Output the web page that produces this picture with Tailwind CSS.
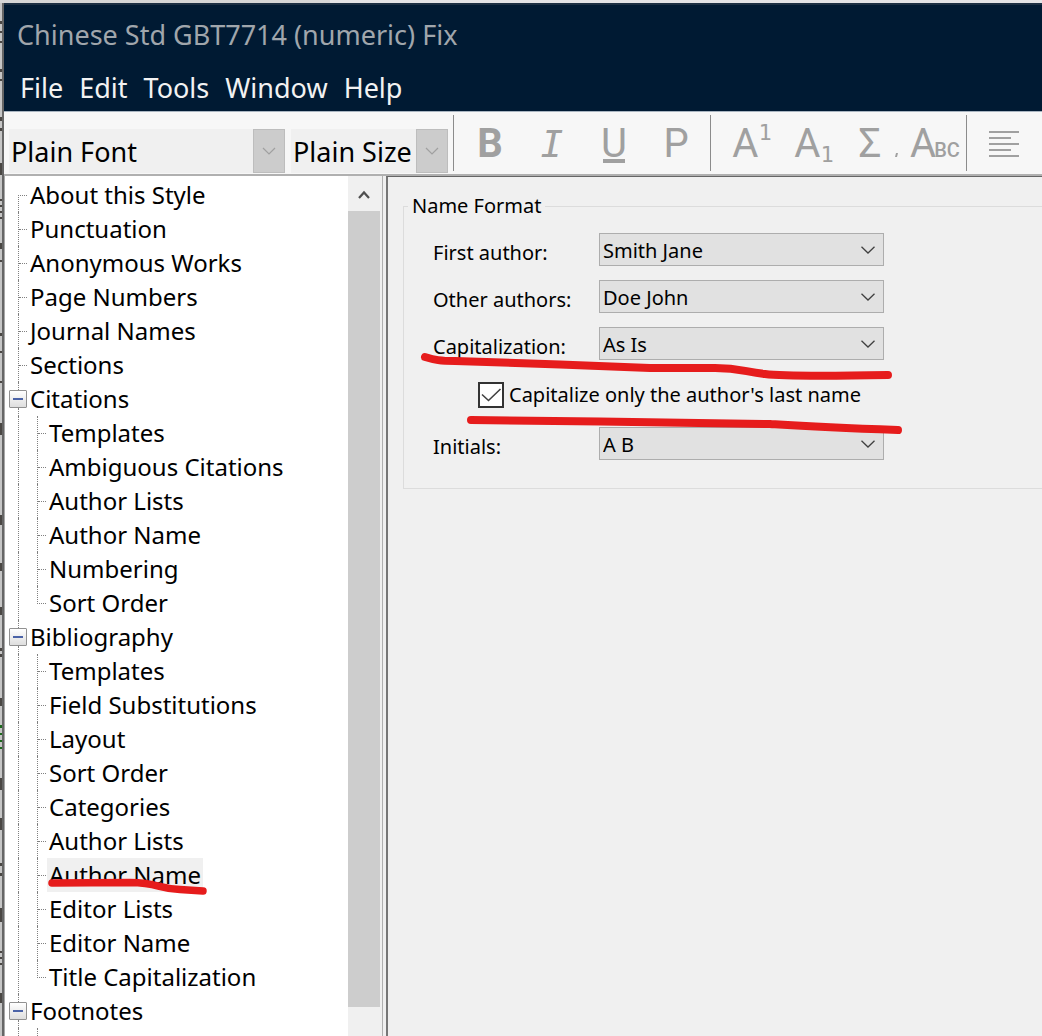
<!DOCTYPE html>
<html lang="en">
<head>
<meta charset="utf-8">
<title>Chinese Std GBT7714 (numeric) Fix</title>
<script src="https://cdn.jsdelivr.net/npm/@tailwindcss/browser@4"></script>
</head>
<body class="h-screen overflow-hidden flex flex-col bg-[#d4d4d4] font-['Noto_Sans','Open_Sans',sans-serif] text-black">
<div class="h-[3px] shrink-0 flex"><div class="w-[330px] bg-[#d6d6d6]"></div><div class="grow bg-[#e4e4e6]"></div></div>
<div class="grow min-h-0 flex">
  <svg class="w-[2px] h-[1033px] shrink-0 bg-[#c6c6c6]" viewBox="0 0 2 1033" fill="#4a4744" aria-hidden="true">
    <path d="M0 18h2v3h-2zM0 28h2v2h-2zM0 38h2v2h-2zM0 66h2v3h-2zM0 76h2v2h-2zM0 114h2v4h-2zM0 125h2v3h-2zM0 160h2v12h-2zM0 196h2v2h-2zM0 202h2v2h-2zM0 208h2v2h-2zM0 214h2v2h-2zM0 240h2v6h-2zM0 257h2v2h-2zM0 330h2v3h-2zM0 348h2v2h-2zM0 378h2v2h-2zM0 420h2v12h-2zM0 512h2v10h-2zM0 560h2v8h-2zM0 604h2v8h-2zM0 645h2v3h-2zM0 651h2v3h-2zM0 695h2v8h-2zM0 775h2v12h-2zM0 815h2v12h-2zM0 860h2v3h-2zM0 870h2v3h-2zM0 905h2v14h-2zM0 948h2v2h-2zM0 954h2v2h-2zM0 960h2v2h-2zM0 990h2v10h-2z"/>
    <path fill="#1c6a1c" d="M0 722h2v3h-2zM0 730h2v2h-2zM0 737h2v2h-2zM0 744h2v2h-2z"/>
  </svg>
  <div class="grow min-w-0 flex flex-col border-l-2 border-[#666]">
    <header class="h-[108px] shrink-0 bg-[#001a33] border-t-2 border-[#1c2f43]">
      <h1 class="h-[60px] pl-[13px] flex items-center text-[27px] text-[#a0a6ac]">Chinese Std GBT7714 (numeric) Fix</h1>
      <nav class="h-[46px] pl-4 flex items-center gap-4 text-[27px] text-[#f2f2f2]">
        <a href="#">File</a><a href="#">Edit</a><a href="#">Tools</a><a href="#">Window</a><a href="#">Help</a>
      </nav>
    </header>
    <div class="h-[65px] shrink-0 flex bg-[#f7f7f7] border-t border-t-[#a9b5c1] border-b-2 border-b-[#b0b0b0] pl-[5px]" role="toolbar" aria-label="Formatting">
      <div class="mt-[17px] h-[44px] w-[276px] shrink-0 flex relative">
        <select aria-label="Font" class="appearance-none w-full bg-[#f0f0f0] pt-[2px] pl-[2px] text-[27px] leading-[42px]"><option>Plain Font</option></select>
        <div class="absolute right-0 inset-y-0 w-8 flex items-center justify-center bg-[#ccc] border border-[#bdbdbd] pointer-events-none"><svg class="w-[14px] h-2" viewBox="0 0 14 8" fill="none" stroke="#a0a0a0" stroke-width="1.2"><path d="M1 1l6 6 6-6"/></svg></div>
      </div>
      <div class="ml-[6px] mt-[17px] h-[44px] w-[157px] shrink-0 flex relative">
        <select aria-label="Size" class="appearance-none w-full bg-[#f0f0f0] pt-[2px] pl-[2px] text-[27px] leading-[42px]"><option>Plain Size</option></select>
        <div class="absolute right-0 inset-y-0 w-8 flex items-center justify-center bg-[#ccc] border border-[#bdbdbd] pointer-events-none"><svg class="w-[14px] h-2" viewBox="0 0 14 8" fill="none" stroke="#a0a0a0" stroke-width="1.2"><path d="M1 1l6 6 6-6"/></svg></div>
      </div>
      <div class="ml-[5px] my-[3px] w-px h-[56px] shrink-0 bg-[#8c8c8c]"></div>
      <div class="ml-[5px] flex h-[62px] text-[#a0a0a0] font-['Roboto',sans-serif] text-[40px] leading-[64px]">
        <button class="w-[62px] font-bold" aria-label="Bold">B</button>
        <button class="w-[62px] italic font-['DejaVu_Sans_Mono',monospace] text-[38px]" aria-label="Italic">I</button>
        <button class="w-[62px] flex flex-col items-center" aria-label="Underline"><span class="h-[47px]">U</span><span class="w-[22px] h-1 bg-[#a0a0a0]"></span></button>
        <button class="w-[62px]" aria-label="Plain">P</button>
      </div>
      <div class="ml-[3px] my-[3px] w-px h-[56px] shrink-0 bg-[#8c8c8c]"></div>
      <div class="ml-[10px] flex h-[62px] text-[#a0a0a0] font-['Roboto',sans-serif] text-[40px] leading-[64px]">
        <button class="w-[62px] flex justify-center" aria-label="Superscript">A<span class="font-['DejaVu_Sans_Mono',monospace] text-[22px] leading-[42px]">1</span></button>
        <button class="w-[62px] flex justify-center" aria-label="Subscript">A<span class="font-['DejaVu_Sans_Mono',monospace] text-[22px] leading-[86px]">1</span></button>
        <button class="w-[50px]" aria-label="Symbol">Σ</button>
        <button class="w-[68px] flex justify-center items-baseline" aria-label="Small caps"><svg class="w-[3px] h-1 mr-3" viewBox="0 0 3 4" fill="#a0a0a0"><path d="M1 0h2l-1 4h-2z"/></svg>A<span class="-ml-[2px] mr-[3px] text-[20px] font-medium">BC</span></button>
      </div>
      <div class="ml-[3px] my-[3px] w-px h-[56px] shrink-0 bg-[#8c8c8c]"></div>
      <button class="ml-[6px] w-[62px] h-[64px] shrink-0 flex items-center justify-center" aria-label="Align left"><svg class="w-[30px] h-[26px]" viewBox="0 0 30 26" fill="#a0a0a0"><path d="M0 0h30v2H0zM0 6h22v2H0zM0 12h30v2H0zM0 18h22v2H0zM0 24h30v2H0z"/></svg></button>
    </div>
    <div class="grow min-h-0 flex bg-[#f0f0f0]">
      <aside class="w-[379px] shrink-0 flex border-l border-l-[#a8a8a8] border-r border-r-[#b0b0b0]">
        <nav class="grow bg-white pt-[2px] overflow-hidden text-[24px] leading-[34px] whitespace-nowrap" aria-label="Style sections">
          <ul id="tree"></ul>
        </nav>
        <div class="w-8 mr-[2px] shrink-0 flex flex-col pt-[2px]">
          <button class="h-[33px] shrink-0 flex items-center justify-center" aria-label="Scroll up"><svg class="w-3 h-[10px]" viewBox="0 0 12 10" fill="none" stroke="#505050" stroke-width="2.2"><path d="M1 8l5-5.500 5 5.500"/></svg></button>
          <div class="grow mb-[29px] bg-[#cdcdcd]"></div>
        </div>
      </aside>
      <main class="grow min-w-0 ml-[3px] border-l-2 border-t border-l-[#777] border-t-[#666] pt-[15px] pl-[15px] text-[20px] leading-7">
        <fieldset class="relative border border-r-0 border-[#dcdcdc] pb-7">
          <legend class="ml-1 px-1">Name Format</legend>
          <div class="pt-[13px] pl-[29px] flex flex-col gap-[14px]" id="fields">
            <div class="flex h-[33px]"><label for="first" class="w-[166px] pt-[6px] shrink-0">First author:</label><div class="relative w-[285px] h-[33px]"><select id="first" class="appearance-none w-full h-full bg-[#e1e1e1] border border-[#adadad] pt-[2px] pl-[3px]"><option>Smith Jane</option></select><svg class="absolute right-[9px] top-[13px] w-[14px] h-2 pointer-events-none" viewBox="0 0 14 8" fill="none" stroke="#404040" stroke-width="1.3"><path d="M.5 .8l6.500 6.200L13.500 .8"/></svg></div></div>
            <div class="flex h-[33px]"><label for="other" class="w-[166px] pt-[6px] shrink-0">Other authors:</label><div class="relative w-[285px] h-[33px]"><select id="other" class="appearance-none w-full h-full bg-[#e1e1e1] border border-[#adadad] pt-[2px] pl-[3px]"><option>Doe John</option></select><svg class="absolute right-[9px] top-[13px] w-[14px] h-2 pointer-events-none" viewBox="0 0 14 8" fill="none" stroke="#404040" stroke-width="1.3"><path d="M.5 .8l6.500 6.200L13.500 .8"/></svg></div></div>
            <div class="flex h-[33px]"><label for="cap" class="w-[166px] pt-[6px] shrink-0">Capitalization:</label><div class="relative w-[285px] h-[33px]"><select id="cap" class="appearance-none w-full h-full bg-[#e1e1e1] border border-[#adadad] pt-[2px] pl-[3px]"><option>As Is</option></select><svg class="absolute right-[9px] top-[13px] w-[14px] h-2 pointer-events-none" viewBox="0 0 14 8" fill="none" stroke="#404040" stroke-width="1.3"><path d="M.5 .8l6.500 6.200L13.500 .8"/></svg></div></div>
            <div class="h-[39px] pt-[3px] pl-[45px] flex items-center gap-[5px]"><span class="relative w-[26px] h-[26px]"><input type="checkbox" id="last" checked class="block appearance-none w-full h-full bg-white border-2 border-[#333]"><svg class="absolute inset-0 w-full h-full pointer-events-none" viewBox="0 0 26 26" fill="none" stroke="#404040" stroke-width="1.6"><path d="M4 12.500l6.500 6L22.500 7"/></svg></span><label for="last">Capitalize only the author's last name</label></div>
            <div class="flex h-[33px]"><label for="initials" class="w-[166px] pt-[6px] shrink-0">Initials:</label><div class="relative w-[285px] h-[33px]"><select id="initials" class="appearance-none w-full h-full bg-[#e1e1e1] border border-[#adadad] pt-[2px] pl-[3px]"><option>A B</option></select><svg class="absolute right-[9px] top-[13px] w-[14px] h-2 pointer-events-none" viewBox="0 0 14 8" fill="none" stroke="#404040" stroke-width="1.3"><path d="M.5 .8l6.500 6.200L13.500 .8"/></svg></div></div>
          </div>
          <svg class="absolute left-4 top-[128px] w-[484px] h-[88px] pointer-events-none" viewBox="420 348 484 88" fill="none" stroke="#e61c1c" stroke-width="8" stroke-linecap="round" stroke-linejoin="round" aria-hidden="true"><path d="M425 357C435 360 440 361 455 361L560 364.500L650 368L715 368C740 368 745 372 765 374C785 376.500 830 376 888 375"/><path d="M471 420L600 421.500L770 424C800 426 820 427.500 898 430"/></svg>
        </fieldset>
      </main>
    </div>
  </div>
</div>
<script>
const sections = [
  ['About this Style'], ['Punctuation'], ['Anonymous Works'], ['Page Numbers'], ['Journal Names'], ['Sections'],
  ['Citations', 'Templates', 'Ambiguous Citations', 'Author Lists', 'Author Name', 'Numbering', 'Sort Order'],
  ['Bibliography', 'Templates', 'Field Substitutions', 'Layout', 'Sort Order', 'Categories', 'Author Lists', '*Author Name', 'Editor Lists', 'Editor Name', 'Title Capitalization'],
  ['Footnotes', 'Templates'],
];
const mark = `<svg class="absolute left-0 top-[18px] w-[162px] h-[20px] pointer-events-none" viewBox="47 876 162 20" fill="none" stroke="#e61c1c" stroke-width="7.500" stroke-linecap="round" aria-hidden="true"><path d="M52 883L130 882.500C160 883 155 888 180 889.500L203 891"/></svg>`;
document.getElementById('tree').innerHTML = sections.map(([name, ...kids], i) => {
  const guide = kids.length
    ? `<button class="ml-1 w-[18px] mr-[3px] flex flex-col" aria-label="Collapse ${name}"><span class="ml-[9px] h-2 border-l border-dotted border-[#808080]"></span><span class="h-[18px] w-[18px] border border-[#919191] rounded-[1px] bg-linear-to-b from-white to-[#dedede] flex items-center justify-center"><span class="w-[10px] h-[2px] bg-[#4b63a7]"></span></span><span class="ml-[9px] h-2 border-l border-dotted border-[#808080]"></span></button>`
    : i === 0
    ? `<span class="ml-[13px] mr-[3px] w-[9px] h-[17px] self-end border-l border-t border-dotted border-[#808080]"></span>`
    : `<span class="ml-[13px] mr-[3px] w-[9px] border-l border-dotted border-[#808080]"><span class="block h-[18px] border-b border-dotted border-[#808080]"></span></span>`;
  const rows = kids.map((k, j) => {
    const sel = k[0] === '*', last = j === kids.length - 1;
    return `<li class="flex h-[34px]"><span class="ml-[13px] w-[19px] shrink-0 border-l border-dotted border-[#808080]"></span>` +
      (last ? `<span class="w-[9px] h-[18px] shrink-0 border-l border-b border-dotted border-[#808080]"></span>`
            : `<span class="w-[9px] shrink-0 border-l border-dotted border-[#808080]"><span class="block h-[18px] border-b border-dotted border-[#808080]"></span></span>`) +
      `<a href="#" class="ml-px px-[2px] ${sel ? 'relative bg-[#f0f0f0]' : ''}">${sel ? k.slice(1) + mark : k}</a></li>`;
  }).join('');
  return `<li><div class="flex h-[34px]">${guide}<a href="#">${name}</a></div>${kids.length ? `<ul>${rows}</ul>` : ''}</li>`;
}).join('');
</script>
</body>
</html>
